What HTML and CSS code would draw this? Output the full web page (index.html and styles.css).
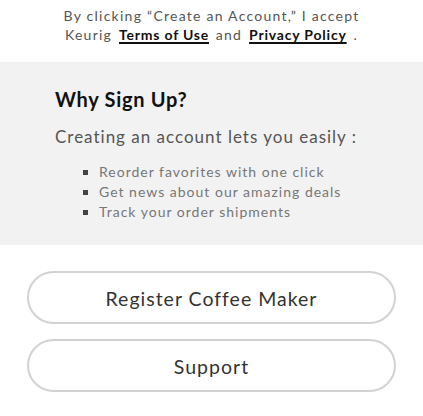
FILE: index.html
```html
<!DOCTYPE html>
<html lang="en">
<head>
<meta charset="utf-8">
<title>Why Sign Up</title>
<link rel="stylesheet" href="styles.css">
</head>
<body>
<p class="terms">By clicking “Create an Account,” I accept<br>Keurig <a class="terms-link" href="#">Terms of Use</a> and <a class="terms-link" href="#">Privacy Policy</a> .</p>
<section class="why">
  <h2 class="why-title">Why Sign Up?</h2>
  <p class="why-intro">Creating an account lets you easily :</p>
  <ul class="why-list">
    <li>Reorder favorites with one click</li>
    <li>Get news about our amazing deals</li>
    <li>Track your order shipments</li>
  </ul>
</section>
<div class="actions">
  <a class="pill-btn" href="#">Register Coffee Maker</a>
  <a class="pill-btn" href="#">Support</a>
</div>
</body>
</html>
```
FILE: styles.css
```css
* { box-sizing: border-box; }
body {
  margin: 0;
  background: #fff;
  font-family: Lato, "Open Sans", sans-serif;
  color: #333;
}
.terms {
  margin: 0;
  padding-top: 6px;
  text-align: center;
  font-size: 14px;
  line-height: 19px;
  letter-spacing: 1.25px;
  color: #555;
}
.terms-link {
  color: #111;
  font-weight: 700;
  letter-spacing: 0.8px;
  text-decoration: underline;
  text-decoration-thickness: 2px;
  text-underline-offset: 2px;
  margin: 0 2px;
}
.why {
  margin-top: 18px;
  background: #f2f2f2;
  padding: 25px 20px 23px 55px;
}
.why-title {
  margin: 0;
  font-size: 20px;
  line-height: 24px;
  font-weight: 700;
  letter-spacing: 0.7px;
  color: #111;
}
.why-intro {
  margin: 14px 0 0;
  font-size: 17px;
  line-height: 24px;
  letter-spacing: 1px;
  color: #555;
}
.why-list {
  margin: 13px 0 0;
  padding: 0 0 0 44px;
  list-style: square;
  font-size: 14px;
  line-height: 20px;
  letter-spacing: 1px;
  color: #777;
}
.why-list li::marker { color: #444; }
.actions {
  display: flex;
  flex-direction: column;
  gap: 15px;
  padding: 26px 27px 0;
}
.pill-btn {
  display: flex;
  align-items: center;
  justify-content: center;
  height: 53px;
  padding-top: 2px;
  border: 2px solid #d2d2d2;
  border-radius: 27px;
  text-decoration: none;
  font-size: 19.5px;
  letter-spacing: 1px;
  color: #333;
}
```
